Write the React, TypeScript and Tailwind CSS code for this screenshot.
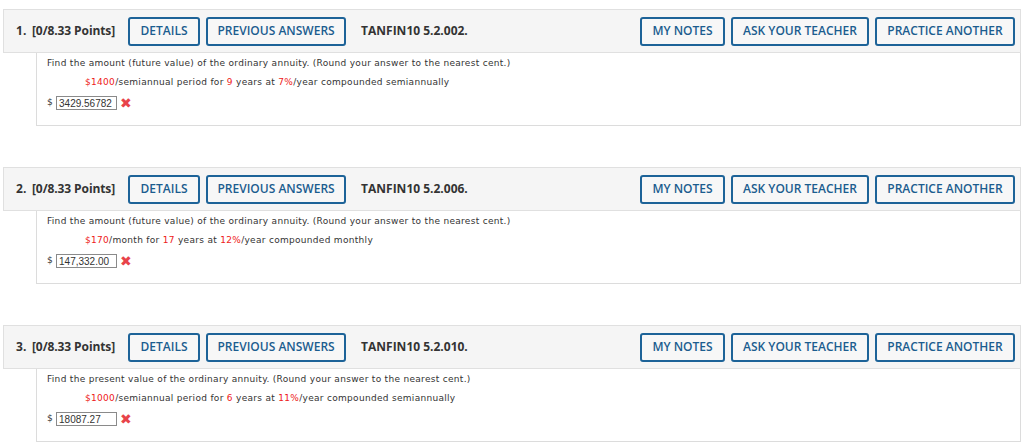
const questions = [
  {
    num: 1,
    code: "TANFIN10 5.2.002.",
    prompt: "Find the amount (future value) of the ordinary annuity. (Round your answer to the nearest cent.)",
    amount: "$1400",
    period: "/semiannual period for ",
    years: "9",
    rate: "7%",
    tail: "/year compounded semiannually",
    answer: "3429.56782",
  },
  {
    num: 2,
    code: "TANFIN10 5.2.006.",
    prompt: "Find the amount (future value) of the ordinary annuity. (Round your answer to the nearest cent.)",
    amount: "$170",
    period: "/month for ",
    years: "17",
    rate: "12%",
    tail: "/year compounded monthly",
    answer: "147,332.00",
  },
  {
    num: 3,
    code: "TANFIN10 5.2.010.",
    prompt: "Find the present value of the ordinary annuity. (Round your answer to the nearest cent.)",
    amount: "$1000",
    period: "/semiannual period for ",
    years: "6",
    rate: "11%",
    tail: "/year compounded semiannually",
    answer: "18087.27",
  },
];

const btn =
  "h-[29px] flex items-center justify-center border-2 border-[#1d6398] rounded-[3px] text-[12px] font-semibold text-[#1b5d8f] bg-[#f7f7f7]";

const Question = ({ q }: { q: (typeof questions)[number] }) => {
  return (
    <div className="mb-[41px]">
      <div className="h-[44px] flex items-center border border-[#e0e0e0] bg-[#f5f5f5] pl-[12px] pr-[5px] font-['Open_Sans',sans-serif] text-[#333]">
        <span className="text-[12px] font-bold w-[16px]">{q.num}.</span>
        <span className="text-[12px] font-bold tracking-[-0.1px]">[0/8.33 Points]</span>
        <button className={`${btn} w-[72px] ml-[13px]`}>DETAILS</button>
        <button className={`${btn} w-[140px] ml-[6px]`}>PREVIOUS ANSWERS</button>
        <span className="text-[12px] font-bold ml-[15px]">{q.code}</span>
        <div className="flex-1" />
        <button className={`${btn} w-[85px]`}>MY NOTES</button>
        <button className={`${btn} w-[138px] ml-[6px]`}>ASK YOUR TEACHER</button>
        <button className={`${btn} w-[140px] ml-[6px]`}>PRACTICE ANOTHER</button>
      </div>
      <div className="ml-[33px] h-[73px] border-x border-b border-[#dcdcdc] pl-[10px] pt-[3px] font-['DejaVu_Sans',sans-serif] text-[9px] tracking-[0.3px] text-[#333]">
        <div className="leading-[14px]">{q.prompt}</div>
        <div className="leading-[14px] mt-[5px] pl-[38px]">
          <span className="text-[#ee2020]">{q.amount}</span>
          {q.period}
          <span className="text-[#ee2020]">{q.years}</span>
          {" years at "}
          <span className="text-[#ee2020]">{q.rate}</span>
          {q.tail}
        </div>
        <div className="flex items-center mt-[7px] h-[14px]">
          <span className="mr-[3px]">$</span>
          <div className="w-[61px] h-[14px] border border-[#8a8a8a] bg-white flex items-center pl-[2px] font-['Liberation_Sans',sans-serif] text-[10px] tracking-normal text-[#333]">
            {q.answer}
          </div>
          <span className="ml-[3px] text-[#e8434a] text-[14px] leading-none">✖</span>
        </div>
      </div>
    </div>
  );
};

export default function App() {
  return (
    <div className="w-[1024px] h-[448px] overflow-hidden bg-white pt-[9px] pl-[3px] pr-[3px]">
      {questions.map((q) => (
        <Question key={q.num} q={q} />
      ))}
    </div>
  );
}
